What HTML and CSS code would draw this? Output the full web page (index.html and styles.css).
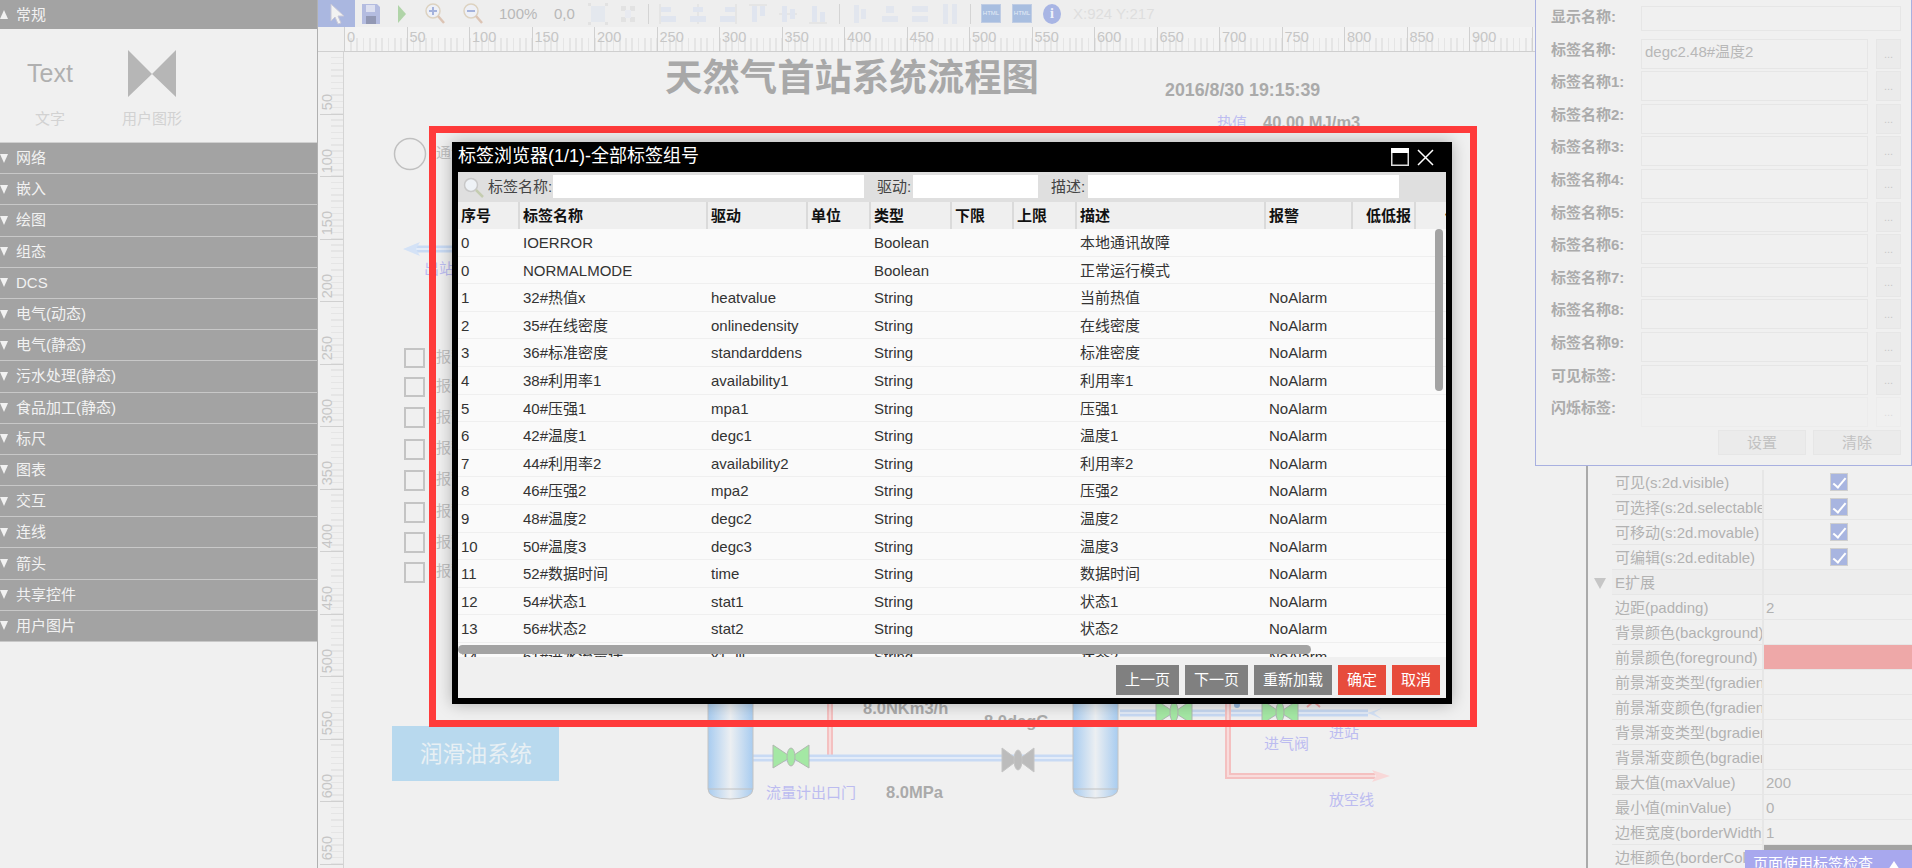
FILE: index.html
```html
<!DOCTYPE html>
<html lang="zh-CN">
<head>
<meta charset="utf-8">
<title>标签浏览器</title>
<link rel="stylesheet" href="styles.css">
</head>
<body>
<div class="app">
  <aside class="palette">
    <div class="pal-head"><i class="tri tri-up"></i>常规</div>
    <div class="pal-body">
      <div class="pal-item pal-text"><div class="text-ico">Text</div><div class="pal-lbl">文字</div></div>
      <div class="pal-item pal-user">
        <svg class="bow" width="48" height="47" viewBox="0 0 48 47"><path d="M0 0 24 24 48 0V47L24 24 0 47Z"/></svg>
        <div class="pal-lbl">用户图形</div>
      </div>
    </div>
    <div class="pal-head"><i class="tri"></i>网络</div>
    <div class="pal-head"><i class="tri"></i>嵌入</div>
    <div class="pal-head"><i class="tri"></i>绘图</div>
    <div class="pal-head"><i class="tri"></i>组态</div>
    <div class="pal-head"><i class="tri"></i>DCS</div>
    <div class="pal-head"><i class="tri"></i>电气(动态)</div>
    <div class="pal-head"><i class="tri"></i>电气(静态)</div>
    <div class="pal-head"><i class="tri"></i>污水处理(静态)</div>
    <div class="pal-head"><i class="tri"></i>食品加工(静态)</div>
    <div class="pal-head"><i class="tri"></i>标尺</div>
    <div class="pal-head"><i class="tri"></i>图表</div>
    <div class="pal-head"><i class="tri"></i>交互</div>
    <div class="pal-head"><i class="tri"></i>连线</div>
    <div class="pal-head"><i class="tri"></i>箭头</div>
    <div class="pal-head"><i class="tri"></i>共享控件</div>
    <div class="pal-head"><i class="tri"></i>用户图片</div>
  </aside>

  <main class="editor">
    <div class="toolbar">
      <div class="tb tb-sel"><svg width="16" height="22" viewBox="0 0 16 22"><path d="M2 1V18L6 14 9 21 12 20 9 13H15Z" fill="#f2f2f2" stroke="#c8c8d8"/></svg></div>
      <div class="tb tb-31"><svg width="18" height="20" viewBox="0 0 18 20"><path d="M0 0H15L18 3V20H0Z" fill="#b4bce0"/><rect x="4" y="1" width="9" height="7" fill="#dde0f0"/><rect x="4" y="12" width="10" height="8" fill="#9298b4"/></svg></div>
      <div class="tb tb-32"><svg width="10" height="18" viewBox="0 0 10 18"><path d="M1 0 9 9 1 18Z" fill="#b0d4a8"/></svg></div>
      <div class="tb tb-33"><svg width="20" height="22" viewBox="0 0 20 22"><circle cx="8" cy="8" r="7" fill="#eef0f6" stroke="#ddd2c0" stroke-width="1.5"/><path d="M8 4V12M4 8H12" stroke="#a4b2dc" stroke-width="2"/><path d="M13 13 19 20" stroke="#dcc4b4" stroke-width="2.5"/></svg></div>
      <div class="tb tb-43"><svg width="20" height="22" viewBox="0 0 20 22"><circle cx="8" cy="8" r="7" fill="#eef0f6" stroke="#ddd2c0" stroke-width="1.5"/><path d="M4 8H12" stroke="#a4b2dc" stroke-width="2"/><path d="M13 13 19 20" stroke="#dcc4b4" stroke-width="2.5"/></svg></div>
      <div class="tb-txt tb-55">100%</div>
      <div class="tb-txt tb-34">0,0</div>
      <div class="tb"><svg width="20" height="24" viewBox="0 0 20 24"><rect x="3" y="4" width="14" height="16" fill="#e4e8ee"/><path d="M0 1H3V4H0ZM17 1H20V4H17ZM0 20H3V23H0ZM17 20H20V23H17Z" fill="#e2e2e2"/></svg></div>
      <div class="tb"><svg width="18" height="22" viewBox="0 0 18 22"><path d="M2 3H7V8H2ZM11 3H16V8H11ZM2 14H7V19H2ZM11 14H16V19H11Z" fill="#e2e2e2"/><rect x="6" y="7" width="6" height="8" fill="#e8eaf0"/></svg></div>
      <div class="tb-sep"></div>
      <div class="tb"><svg width="18" height="20" viewBox="0 0 18 20"><path d="M1 0V20" stroke="#dcdcdc"/><rect x="2" y="3" width="10" height="5" fill="#e0e5ef"/><rect x="2" y="12" width="15" height="6" fill="#e0e5ef"/></svg></div>
      <div class="tb"><svg width="18" height="20" viewBox="0 0 18 20"><path d="M9 0V20" stroke="#dcdcdc"/><rect x="4" y="3" width="10" height="5" fill="#e0e5ef"/><rect x="1" y="12" width="16" height="6" fill="#e0e5ef"/></svg></div>
      <div class="tb"><svg width="18" height="20" viewBox="0 0 18 20"><path d="M17 0V20" stroke="#dcdcdc"/><rect x="6" y="3" width="10" height="5" fill="#e0e5ef"/><rect x="1" y="12" width="15" height="6" fill="#e0e5ef"/></svg></div>
      <div class="tb"><svg width="18" height="20" viewBox="0 0 18 20"><path d="M0 1H18" stroke="#dcdcdc"/><rect x="3" y="2" width="5" height="16" fill="#e0e5ef"/><rect x="11" y="2" width="5" height="10" fill="#e0e5ef"/></svg></div>
      <div class="tb"><svg width="18" height="20" viewBox="0 0 18 20"><path d="M0 10H18" stroke="#dcdcdc"/><rect x="3" y="2" width="5" height="16" fill="#e0e5ef"/><rect x="11" y="5" width="5" height="10" fill="#e0e5ef"/></svg></div>
      <div class="tb"><svg width="18" height="20" viewBox="0 0 18 20"><path d="M0 19H18" stroke="#dcdcdc"/><rect x="3" y="2" width="5" height="16" fill="#e0e5ef"/><rect x="11" y="8" width="5" height="10" fill="#e0e5ef"/></svg></div>
      <div class="tb-sep tb-12"></div>
      <div class="tb"><svg width="14" height="20" viewBox="0 0 14 20"><rect x="1" y="1" width="5" height="18" fill="#e2e6ee"/><rect x="8" y="5" width="5" height="10" fill="#e2e6ee"/></svg></div>
      <div class="tb"><svg width="18" height="20" viewBox="0 0 18 20"><rect x="5" y="2" width="8" height="7" fill="#e2e6ee"/><rect x="1" y="12" width="16" height="6" fill="#e2e6ee"/></svg></div>
      <div class="tb"><svg width="18" height="20" viewBox="0 0 18 20"><rect x="1" y="2" width="16" height="6" fill="#e2e6ee"/><rect x="1" y="12" width="16" height="6" fill="#e2e6ee"/></svg></div>
      <div class="tb"><svg width="16" height="22" viewBox="0 0 16 22"><rect x="1" y="1" width="5" height="20" fill="#e2e6ee"/><rect x="10" y="1" width="5" height="20" fill="#e2e6ee"/></svg></div>
      <div class="tb-sep"></div>
      <div class="tb tb-32"><span class="html-ico">HTML</span></div>
      <div class="tb"><span class="html-ico">HTML</span></div>
      <div class="tb"><span class="info-ico">i</span></div>
      <div class="tb-coord">X:924 Y:217</div>
    </div>
    <div class="ruler-row">
      <div class="ruler-corner"></div>
      <div class="ruler-h">
        <span>0</span><span>50</span><span>100</span><span>150</span><span>200</span><span>250</span><span>300</span><span>350</span><span>400</span><span>450</span><span>500</span><span>550</span><span>600</span><span>650</span><span>700</span><span>750</span><span>800</span><span>850</span><span>900</span><span></span>
      </div>
    </div>
    <div class="work">
      <div class="ruler-v">
        <span>50</span><span>100</span><span>150</span><span>200</span><span>250</span><span>300</span><span>350</span><span>400</span><span>450</span><span>500</span><span>550</span><span>600</span><span>650</span>
      </div>
      <div class="canvas">
        <svg class="diagram" width="1242" height="816" viewBox="344 52 1242 816">
          <defs>
            <linearGradient id="tank" x1="0" x2="1" y1="0" y2="0">
              <stop offset="0" stop-color="#a8ccf0"/><stop offset=".5" stop-color="#eceff2"/><stop offset="1" stop-color="#a8ccf0"/>
            </linearGradient>
          </defs>
          <text class="d-title" x="665" y="91">天然气首站系统流程图</text>
          <text class="d-val d-date" x="1165" y="96">2016/8/30 19:15:39</text>
          <text class="d-blue" x="1217" y="128">热值</text>
          <text class="d-val" x="1263" y="128">40.00 MJ/m3</text>
          <circle cx="410" cy="154" r="15.5" fill="none" stroke="#c0c0c0" stroke-width="1.5"/>
          <text class="d-grey" x="436" y="158">通讯</text>

          <path class="p-blue" d="M452 249H416"/><path class="p-blue-in" d="M452 249H416"/>
          <path d="M403 249 420 242 416 249 420 256Z" fill="#d4e2f6"/>
          <text class="d-blue" x="424" y="274">出站</text>

          <rect class="cb" x="405" y="349" width="19" height="18"/><text class="d-grey" x="436" y="362">报警</text>
          <rect class="cb" x="405" y="378" width="19" height="18"/><text class="d-grey" x="436" y="391">报警</text>
          <rect class="cb" x="405" y="408" width="19" height="19"/><text class="d-grey" x="436" y="422">报警</text>
          <rect class="cb" x="405" y="440" width="19" height="19"/><text class="d-grey" x="436" y="453">报警</text>
          <rect class="cb" x="405" y="471" width="19" height="19"/><text class="d-grey" x="436" y="484">报警</text>
          <rect class="cb" x="405" y="503" width="19" height="19"/><text class="d-grey" x="436" y="516">报警</text>
          <rect class="cb" x="405" y="533" width="19" height="19"/><text class="d-grey" x="436" y="547">报警</text>
          <rect class="cb" x="405" y="563" width="19" height="19"/><text class="d-grey" x="436" y="576">报警</text>

          <rect x="392" y="726" width="167" height="55" fill="#b8d9ee"/>
          <text class="d-oil" x="420" y="762">润滑油系统</text>

          <path class="p-red" d="M830 690V757"/><path class="p-red-in" d="M830 690V757"/>
          <path class="p-blue" d="M753 758H1073"/><path class="p-blue-in" d="M753 758H1073"/>
          <path class="tank" d="M708 600V789Q708 799 730 799 753 799 753 789V600Z"/>
          <path d="M708 789H753" stroke="#c0c0c0" fill="none"/>
          <path class="tank" d="M1073 600V789Q1073 798 1095 798 1118 798 1118 789V600Z"/>
          <path d="M1073 789H1118" stroke="#c0c0c0" fill="none"/>

          <path class="v-green" d="M773 745 791 757 773 768ZM809 745 791 757 809 768Z"/><ellipse class="v-green" cx="791" cy="757" rx="4" ry="9"/>
          <path class="v-grey" d="M1002 748 1018 760 1002 772ZM1034 748 1018 760 1034 772Z"/><ellipse class="v-grey" cx="1018" cy="760" rx="4" ry="10"/>

          <path class="p-blue" d="M1120 713H1368"/><path class="p-blue-in" d="M1120 713H1372"/>
          <path d="M1382 708 1368 713 1382 719 1374 713Z" fill="#d4e2f6"/>
          <path class="p-red" d="M1228 690V776H1375"/><path class="p-red-in" d="M1228 690V776H1375"/>
          <path d="M1390 776 1372 770 1376 776 1372 782Z" fill="#f8d8d8"/>
          <path class="v-green" d="M1156 700 1174 712 1156 724ZM1192 700 1174 712 1192 724Z"/><ellipse class="v-green" cx="1174" cy="712" rx="4" ry="10"/>
          <path class="v-green" d="M1262 700 1280 712 1262 724ZM1298 700 1280 712 1298 724Z"/><ellipse class="v-green" cx="1280" cy="712" rx="4" ry="10"/>
          <circle cx="1237" cy="705" r="3" fill="#98b8dc"/>
          <path d="M1307 696 1320 707M1320 696 1307 707" stroke="#f0a8a8" stroke-width="2"/>

          <text class="d-val" x="863" y="714">8.0NKm3/h</text>
          <text class="d-val" x="984" y="727">8.0degC</text>
          <text class="d-blue" x="766" y="798">流量计出口门</text>
          <text class="d-val" x="886" y="798">8.0MPa</text>
          <text class="d-blue" x="1329" y="738">进站</text>
          <text class="d-blue" x="1264" y="749">进气阀</text>
          <text class="d-blue" x="1329" y="805">放空线</text>
        </svg>
      </div>
    </div>
  </main>

  <section class="props">
    <div class="pr"><span>可见(s:2d.visible)</span><span class="v-c"><i class="chk"></i></span></div>
    <div class="pr"><span>可选择(s:2d.selectable)</span><span class="v-c"><i class="chk"></i></span></div>
    <div class="pr"><span>可移动(s:2d.movable)</span><span class="v-c"><i class="chk"></i></span></div>
    <div class="pr"><span>可编辑(s:2d.editable)</span><span class="v-c"><i class="chk"></i></span></div>
    <div class="pr pr-group"><i class="tri-g"></i><span>E扩展</span><span></span></div>
    <div class="pr"><span>边距(padding)</span><span>2</span></div>
    <div class="pr"><span>背景颜色(background)</span><span></span></div>
    <div class="pr"><span>前景颜色(foreground)</span><span class="sw-red"></span></div>
    <div class="pr"><span>前景渐变类型(fgradient)</span><span></span></div>
    <div class="pr"><span>前景渐变颜色(fgradient)</span><span></span></div>
    <div class="pr"><span>背景渐变类型(bgradient)</span><span></span></div>
    <div class="pr"><span>背景渐变颜色(bgradient)</span><span></span></div>
    <div class="pr"><span>最大值(maxValue)</span><span>200</span></div>
    <div class="pr"><span>最小值(minValue)</span><span>0</span></div>
    <div class="pr"><span>边框宽度(borderWidth)</span><span>1</span></div>
    <div class="pr"><span>边框颜色(borderColor)</span><span class="sw-grey"></span></div>
  </section>
</div>

<section class="tag-panel">
  <div class="fld fld-wide"><label>显示名称:</label><div class="inp"></div></div>
  <div class="fld"><label>标签名称:</label><div class="inp">degc2.48#温度2</div><div class="dots">...</div></div>
  <div class="fld"><label>标签名称1:</label><div class="inp"></div><div class="dots">...</div></div>
  <div class="fld"><label>标签名称2:</label><div class="inp"></div><div class="dots">...</div></div>
  <div class="fld"><label>标签名称3:</label><div class="inp"></div><div class="dots">...</div></div>
  <div class="fld"><label>标签名称4:</label><div class="inp"></div><div class="dots">...</div></div>
  <div class="fld"><label>标签名称5:</label><div class="inp"></div><div class="dots">...</div></div>
  <div class="fld"><label>标签名称6:</label><div class="inp"></div><div class="dots">...</div></div>
  <div class="fld"><label>标签名称7:</label><div class="inp"></div><div class="dots">...</div></div>
  <div class="fld"><label>标签名称8:</label><div class="inp"></div><div class="dots">...</div></div>
  <div class="fld"><label>标签名称9:</label><div class="inp"></div><div class="dots">...</div></div>
  <div class="fld"><label>可见标签:</label><div class="inp"></div><div class="dots">...</div></div>
  <div class="fld fld-off"><label>闪烁标签:</label><div class="inp"></div><div class="dots">...</div></div>
  <div class="tp-btns"><div class="tp-btn">设置</div><div class="tp-btn">清除</div></div>
</section>

<div class="check-tab"><span>页面使用标签检查</span><i class="tri-w"></i></div>

<div class="red-frame"></div>

<section class="modal">
  <header class="m-title">
    <span>标签浏览器(1/1)-全部标签组号</span>
    <div class="m-win">
      <svg width="18" height="18" viewBox="0 0 18 18"><rect x=".75" y=".75" width="16.5" height="16.5" fill="none" stroke="#ddd" stroke-width="1.5"/><rect x="0" y="0" width="18" height="5" fill="#fff"/></svg>
      <svg width="17" height="17" viewBox="0 0 17 17"><path d="M1 1 16 16M16 1 1 16" stroke="#fff" stroke-width="1.5"/></svg>
    </div>
  </header>
  <div class="m-search">
    <svg class="m-mag" width="21" height="21" viewBox="0 0 21 21"><circle cx="8" cy="8" r="6.5" fill="#eef2f6" stroke="#c8c8c8" stroke-width="1.5"/><path d="M13 13 20 20" stroke="#c4ccb0" stroke-width="2.5"/></svg>
    <label class="l-name">标签名称:</label><div class="m-inp i-name"></div>
    <label class="l-drv">驱动:</label><div class="m-inp i-drv"></div>
    <label class="l-desc">描述:</label><div class="m-inp i-desc"></div>
  </div>
  <div class="m-table">
    <div class="tr th">
      <span>序号</span><span>标签名称</span><span>驱动</span><span>单位</span><span>类型</span><span>下限</span><span>上限</span><span>描述</span><span>报警</span><span class="th-r">低低报</span><span class="th-x">低报</span>
    </div>
    <div class="tbody">
      <div class="tr"><span>0</span><span>IOERROR</span><span></span><span></span><span>Boolean</span><span></span><span></span><span>本地通讯故障</span><span></span></div>
      <div class="tr"><span>0</span><span>NORMALMODE</span><span></span><span></span><span>Boolean</span><span></span><span></span><span>正常运行模式</span><span></span></div>
      <div class="tr"><span>1</span><span>32#热值x</span><span>heatvalue</span><span></span><span>String</span><span></span><span></span><span>当前热值</span><span>NoAlarm</span></div>
      <div class="tr"><span>2</span><span>35#在线密度</span><span>onlinedensity</span><span></span><span>String</span><span></span><span></span><span>在线密度</span><span>NoAlarm</span></div>
      <div class="tr"><span>3</span><span>36#标准密度</span><span>standarddens</span><span></span><span>String</span><span></span><span></span><span>标准密度</span><span>NoAlarm</span></div>
      <div class="tr"><span>4</span><span>38#利用率1</span><span>availability1</span><span></span><span>String</span><span></span><span></span><span>利用率1</span><span>NoAlarm</span></div>
      <div class="tr"><span>5</span><span>40#压强1</span><span>mpa1</span><span></span><span>String</span><span></span><span></span><span>压强1</span><span>NoAlarm</span></div>
      <div class="tr"><span>6</span><span>42#温度1</span><span>degc1</span><span></span><span>String</span><span></span><span></span><span>温度1</span><span>NoAlarm</span></div>
      <div class="tr"><span>7</span><span>44#利用率2</span><span>availability2</span><span></span><span>String</span><span></span><span></span><span>利用率2</span><span>NoAlarm</span></div>
      <div class="tr"><span>8</span><span>46#压强2</span><span>mpa2</span><span></span><span>String</span><span></span><span></span><span>压强2</span><span>NoAlarm</span></div>
      <div class="tr"><span>9</span><span>48#温度2</span><span>degc2</span><span></span><span>String</span><span></span><span></span><span>温度2</span><span>NoAlarm</span></div>
      <div class="tr"><span>10</span><span>50#温度3</span><span>degc3</span><span></span><span>String</span><span></span><span></span><span>温度3</span><span>NoAlarm</span></div>
      <div class="tr"><span>11</span><span>52#数据时间</span><span>time</span><span></span><span>String</span><span></span><span></span><span>数据时间</span><span>NoAlarm</span></div>
      <div class="tr"><span>12</span><span>54#状态1</span><span>stat1</span><span></span><span>String</span><span></span><span></span><span>状态1</span><span>NoAlarm</span></div>
      <div class="tr"><span>13</span><span>56#状态2</span><span>stat2</span><span></span><span>String</span><span></span><span></span><span>状态2</span><span>NoAlarm</span></div>
      <div class="tr"><span>14</span><span>61#进水流量计</span><span>x1_lli</span><span></span><span>String</span><span></span><span></span><span>状态2</span><span>NoAlarm</span></div>
      <div class="sb-v"></div>
      <div class="sb-h"></div>
    </div>
  </div>
  <footer class="m-foot">
    <div class="btn">上一页</div><div class="btn">下一页</div><div class="btn">重新加载</div><div class="btn btn-red">确定</div><div class="btn btn-red">取消</div>
  </footer>
</section>
</body>
</html>
```
FILE: styles.css
```css
* { box-sizing: border-box; }
html, body { margin: 0; height: 100%; }
body {
  position: relative;
  width: 1912px;
  height: 868px;
  overflow: hidden;
  background: #f0f0f0;
  font: 15px/1.2 "Liberation Sans", "Noto Sans CJK SC", sans-serif;
  color: #333;
}
.app { display: flex; height: 868px; }

/* palette */
.palette {
  width: 318px;
  flex: none;
  border-right: 1px solid #b0b0b0;
  background: #f0f0f0;
}
.pal-head {
  height: 31.2px;
  display: flex;
  align-items: center;
  background: #a3a3a3;
  border-bottom: 1px solid #c8c8c8;
  color: #f2f2f2;
}
.pal-head:first-child { height: 29px; border-bottom: 0; }
.tri {
  width: 0; height: 0;
  margin-right: 8px;
  border-left: 4.5px solid transparent;
  border-right: 4.5px solid transparent;
  border-top: 9px solid #f2f2f2;
}
.tri-up { border-top: 0; border-bottom: 9px solid #f2f2f2; }
.pal-body {
  height: 114px;
  display: flex;
  border-bottom: 1px solid #d0d0d0;
}
.pal-item { display: flex; flex-direction: column; align-items: center; }
.pal-text { width: 100px; padding-top: 29px; }
.pal-user { width: 104px; padding-top: 21px; }
.text-ico { font-size: 25px; line-height: 30px; color: #b0b0b0; }
.bow { fill: #b6b6b6; display: block; }
.pal-lbl { color: #d2d2d2; line-height: 18px; }
.pal-text .pal-lbl { margin-top: 22px; }
.pal-user .pal-lbl { margin-top: 13px; }

/* editor */
.editor { width: 1268px; flex: none; display: flex; flex-direction: column; }
.toolbar {
  height: 27px;
  display: flex;
  align-items: center;
  background: #eeeeee;
  overflow: hidden;
  flex: none;
}
.tb { width: 30px; height: 27px; flex: none; display: flex; align-items: center; justify-content: center; }
.tb-sel { width: 37px; background: #aab7e0; }
.tb-31 { width: 31px; }
.tb-32 { width: 32px; }
.tb-33 { width: 33px; }
.tb-43 { width: 43px; }
.tb-txt { flex: none; padding-left: 5px; color: #b8b8b8; font-size: 15px; }
.tb-55 { width: 55px; }
.tb-34 { width: 34px; }
.tb-sep { width: 10px; height: 22px; flex: none; }
.tb-12 { width: 12px; }
.tb-sep::after { content: ""; display: block; width: 1px; height: 20px; margin: 1px auto; background: #d4d4d4; }
.html-ico {
  width: 20px; height: 19px;
  display: flex; align-items: center; justify-content: center;
  background: #a8bee0;
  border: 1px solid #c0cde4;
  color: #e4ecf6;
  font-size: 6px;
}
.info-ico {
  width: 18px; height: 20px;
  border-radius: 50%;
  background: #a8b5e4;
  color: #f0f2fa;
  font: bold 14px/20px "Liberation Serif", serif;
  text-align: center;
}
.tb-coord { padding-left: 6px; color: #dedede; white-space: nowrap; }

/* rulers */
.ruler-row { height: 25px; display: flex; flex: none; }
.ruler-corner { width: 26px; flex: none; border-bottom: 1px solid #d0d0d0; }
.ruler-h {
  flex: 1;
  display: flex;
  overflow: hidden;
  background: #f3f3f3 repeating-linear-gradient(90deg, #e5e5e5 0 1.5px, transparent 1.5px 6.25px) 0 100% / 100% 13px no-repeat;
  border-bottom: 1px solid #cfcfcf;
}
.ruler-h span {
  width: 62.5px;
  flex: none;
  border-left: 1.5px solid #d0d0d0;
  padding: 2px 0 0 2px;
  color: #c6c6c6;
  font-size: 14.5px;
  line-height: 16px;
}
.work { flex: 1; display: flex; min-height: 0; }
.ruler-v {
  width: 26px;
  flex: none;
  border-right: 1px solid #d4d4d4;
  display: flex;
  flex-direction: column;
  overflow: hidden;
  background: repeating-linear-gradient(180deg, transparent 0 4.75px, #e5e5e5 4.75px 6.25px) 100% 0 / 12px 100% no-repeat;
}
.ruler-v span {
  height: 62.5px;
  flex: none;
  border-bottom: 1.5px solid #d0d0d0;
  margin-left: 2px;
  padding-bottom: 3px;
  display: flex;
  color: #c6c6c6;
  font-size: 14.5px;
  line-height: 15px;
  writing-mode: sideways-lr;
  justify-content: flex-start;
  align-items: flex-start;
}
.canvas { flex: 1; position: relative; overflow: hidden; }
.diagram { position: absolute; left: 0; top: 0; display: block; }
.diagram text { font-family: "Liberation Sans", "Noto Sans CJK SC", sans-serif; font-size: 15px; }
.diagram .d-title { font-size: 37.4px; font-weight: 700; fill: #a8a8a8; }
.diagram .d-val { font-size: 16.5px; font-weight: 700; fill: #aaaaaa; }
.diagram .d-date { font-size: 17.8px; }
.diagram .d-blue { fill: #bcbcf0; }
.diagram .d-grey { fill: #c0c0c0; }
.diagram .d-oil { font-size: 22.4px; fill: #e8f0f4; }
.cb { fill: none; stroke: #c4c4c4; stroke-width: 2; }
.tank { fill: url(#tank); stroke: #c4c4c4; stroke-width: 1; }
.p-blue { fill: none; stroke: #c8daf4; stroke-width: 7; }
.p-blue-in { fill: none; stroke: #e4ecf8; stroke-width: 2; }
.p-red { fill: none; stroke: #f4c0c0; stroke-width: 6; }
.p-red-in { fill: none; stroke: #f8dcdc; stroke-width: 2; }
.v-green { fill: #a4e8a4; stroke: #b0b8b0; }
.v-grey { fill: #bcbcbc; stroke: #c4c4c4; }

/* right property list */
.props {
  flex: 1;
  min-width: 0;
  border-left: 2px solid #aaaaaa;
  padding: 470px 0 0 24px;
}
.pr {
  display: grid;
  grid-template-columns: 150px 1fr;
  height: 25px;
  border-bottom: 1px solid #e6e6e6;
  color: #b2b2b2;
  line-height: 25px;
  position: relative;
}
.pr > span { overflow: hidden; white-space: nowrap; padding-left: 3px; }
.pr > span:last-child { border-left: 2px solid #e6e6e6; padding-left: 2px; min-width: 0; }
.pr > .v-c { display: flex; align-items: center; justify-content: center; padding-left: 0; }
.chk {
  width: 18px; height: 18px;
  display: block;
  position: relative;
  background: #a8b5e0;
  border: 1px solid #cfcfcf;
  margin-right: 1px;
}
.chk::after {
  content: "";
  position: absolute;
  left: 5px; top: 1px;
  width: 5px; height: 11px;
  border: solid #fff;
  border-width: 0 2.5px 2.5px 0;
  transform: rotate(40deg);
}
.pr-group { background: #ededed; }
.tri-g {
  position: absolute;
  left: -18px; top: 8px;
  width: 0; height: 0;
  border-left: 6.5px solid transparent;
  border-right: 6.5px solid transparent;
  border-top: 11px solid #c6c6c6;
}
.sw-red { background: #eea8a8; }
.sw-grey { background: #a3a3a3; }

/* floating tag panel */
.tag-panel {
  position: absolute;
  left: 1535px; top: -1px;
  width: 377px; height: 467px;
  background: #f0f0f0;
  border: 1px solid #a8b0e0;
  padding: 6px 10px 0 15px;
}
.fld {
  display: grid;
  grid-template-columns: 90px 227px 33px;
  height: 25px;
  margin-bottom: 7.6px;
  align-items: stretch;
}
.fld-wide { grid-template-columns: 90px 260px; }
.fld > label { font-weight: 700; color: #ababab; line-height: 21px; white-space: nowrap; }
.inp {
  border: 1.5px solid #e6e6e6;
  color: #b8b8b8;
  padding-left: 3px;
  line-height: 23px;
  white-space: nowrap;
}
.dots {
  width: 25px;
  margin-left: 8px;
  background: #ebebeb;
  border: 1px solid #e6e6e6;
  color: #c8c8c8;
  text-align: center;
  font-size: 11px;
  line-height: 28px;
}
.fld-off .inp, .fld-off .dots { border-color: #ececec; background: #f0f0f0; color: #dcdcdc; }
.tp-btns { display: flex; justify-content: flex-end; gap: 7px; }
.tp-btn {
  width: 88px; height: 25px;
  background: #ebebeb;
  border: 1px solid #e6e6e6;
  color: #c2c2c2;
  text-align: center;
  line-height: 23px;
}

.check-tab {
  position: absolute;
  left: 1745px; top: 850px;
  width: 167px; height: 18px;
  overflow: hidden;
  background: #a8a8ee;
  color: #fff;
  padding: 5px 0 0 8px;
  line-height: 18px;
  display: flex;
}
.tri-w {
  margin: 6px 0 0 15px;
  width: 0; height: 0;
  border-left: 6px solid transparent;
  border-right: 6px solid transparent;
  border-bottom: 9px solid #fff;
}

.red-frame {
  position: absolute;
  left: 429px; top: 126px;
  width: 1048px; height: 601px;
  border: 7px solid #ff3b3b;
}

/* modal */
.modal {
  position: absolute;
  left: 452px; top: 142px;
  width: 1000px; height: 562px;
  background: #000;
  border: 6px solid #000;
  border-top: 0;
  box-shadow: 0 0 15px rgba(0, 0, 0, .28);
  display: flex;
  flex-direction: column;
}
.m-title {
  height: 30px;
  flex: none;
  display: flex;
  align-items: center;
  justify-content: space-between;
  color: #fff;
  font-size: 18px;
  padding-right: 12px;
}
.m-win { display: flex; align-items: center; gap: 8px; }
.m-win svg { display: block; }
.m-search {
  height: 30px;
  flex: none;
  display: flex;
  align-items: center;
  background: #dfdfdf;
  padding-left: 5px;
  color: #444;
}
.m-mag { margin-right: 4px; }
.m-search label { white-space: nowrap; }
.m-inp { height: 23px; background: #fff; flex: none; margin-bottom: 2px; }
.l-name { width: 65px; }
.i-name { width: 311px; }
.l-drv { width: 36px; margin-left: 13px; }
.i-drv { width: 125px; }
.l-desc { width: 37px; margin-left: 13px; }
.i-desc { width: 311px; }
.m-table { height: 455px; flex: none; background: #fff; overflow: hidden; }
.tr {
  display: grid;
  grid-template-columns: 62px 188px 100px 63px 81px 62px 63px 189px 87px 63px 40px;
  height: 27.6px;
  line-height: 27px;
  background: #fafafa;
  border-bottom: 1.5px solid #efefef;
  color: #333;
}
.tr > span { padding-left: 3px; white-space: nowrap; overflow: hidden; }
.th { height: 27px; background: #efefef; border-bottom: 0; color: #111; font-weight: 700; }
.th > span { border-right: 2px solid #dadada; }
.th > .th-r { text-align: right; padding: 0 3px 0 0; }
.th > .th-x { border: 0; padding-left: 29px; }
.tbody { position: relative; height: 428px; overflow: hidden; }
.sb-v {
  position: absolute;
  left: 977px; top: 0;
  width: 8px; height: 162px;
  border-radius: 4px;
  background: #a3a3a3;
}
.sb-h {
  position: absolute;
  left: 0; top: 416px;
  width: 853px; height: 9px;
  border-radius: 4.5px;
  background: #a3a3a3;
}
.m-foot {
  flex: 1;
  display: flex;
  justify-content: flex-end;
  gap: 6px;
  padding: 8px 6px 0 0;
  background: #f0f0f0;
}
.btn {
  height: 30px;
  padding: 0 9px;
  background: #808080;
  color: #fff;
  line-height: 30px;
  white-space: nowrap;
}
.btn-red { background: #e74c3c; }
```
